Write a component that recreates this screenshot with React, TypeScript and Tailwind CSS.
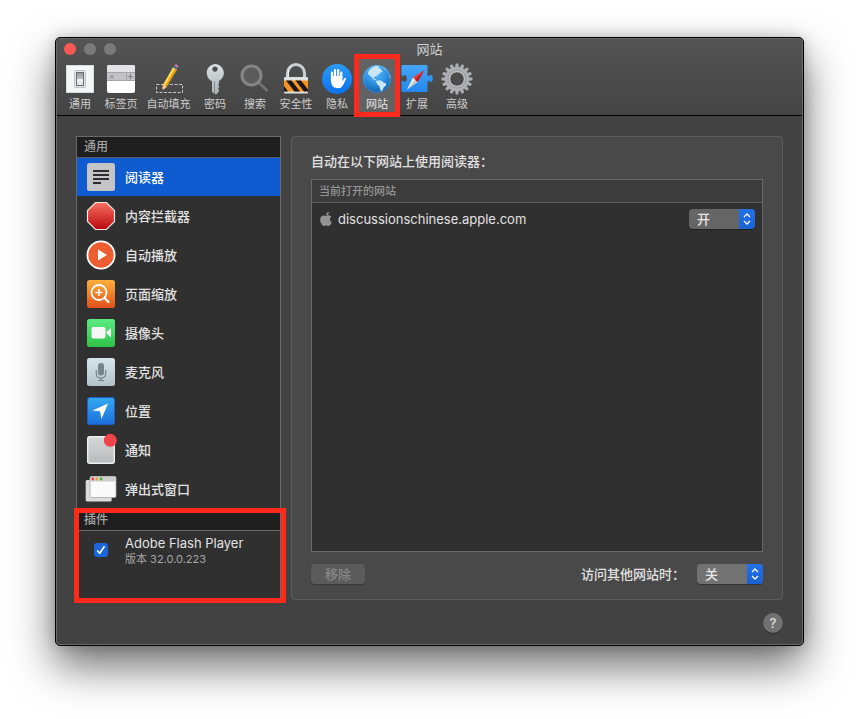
import React, { useState } from "react";
import { FaApple } from "react-icons/fa";

interface IconProps {
  children: React.ReactNode;
}

const Icon: React.FC<IconProps> = ({ children }) => (
  <svg
    viewBox="0 0 32 32"
    className="w-8 h-8 shrink-0 overflow-visible"
    aria-hidden="true"
  >
    {children}
  </svg>
);

const GeneralIcon = () => (
  <Icon>
    <rect x="2" y="2" width="28" height="28" fill="#f5f6f8" />
    <rect x="2.5" y="2.5" width="27" height="27" fill="none" stroke="#d9dadd" />
    <rect x="10.5" y="7.5" width="11" height="17" rx="1" fill="#e4e4e6" stroke="#c3c4c8" />
    <rect x="12.5" y="9.5" width="7" height="13" fill="url(#switch)" stroke="#6d6d73" />
    <defs>
      <linearGradient id="switch" x1="0" y1="0" x2="0" y2="1">
        <stop offset="0" stopColor="#8f9096" />
        <stop offset="0.5" stopColor="#c4c5ca" />
        <stop offset="0.55" stopColor="#f4f4f6" />
        <stop offset="1" stopColor="#dcdde1" />
      </linearGradient>
    </defs>
  </Icon>
);

const TabsIcon = () => (
  <Icon>
    <rect x="2" y="2" width="28" height="28" rx="2" fill="#fff" />
    <path d="M2 10V4a2 2 0 0 1 2-2h24a2 2 0 0 1 2 2v6z" fill="#e3e2e4" />
    <rect x="2" y="9.5" width="28" height="8.5" fill="#c3c2c4" />
    <path d="M2 9.5h28M2 17.5h28M21.5 9.5v8" stroke="#a5a4a7" fill="none" />
    <path d="M5 12l3.5 3.5M8.5 12L5 15.5M25.5 11v5.5M22.8 13.7h5.5" stroke="#808083" fill="none" />
  </Icon>
);

const AutoFillIcon = () => (
  <Icon>
    <rect x="3.5" y="21.5" width="26" height="8" fill="none" stroke="#c9c9c9" strokeDasharray="3 1.5" />
    <path d="M9 27.5l1-5.5 10.2-17.8 3.8 2.2-10.6 17.8z" fill="#f6bd2d" />
    <path d="M10 22l10.2-17.8 1.2.7-10 17.9z" fill="#ffdf62" />
    <path d="M12.4 23.4L22.8 5.7l1.2.7-10.6 17.8z" fill="#d98f16" />
    <path d="M9 27.5l1-5.5 3.4 2.2z" fill="#edc9a0" />
    <path d="M9 27.5l.4-2 1 .7z" fill="#333" />
    <path d="M20.2 4.2l1.2-2 3.8 2.2-1.2 2z" fill="#4d6c8c" />
    <path d="M21.4 2.2c1-2 4.8 0 3.8 2.2z" fill="#f08aa4" />
  </Icon>
);

const KeyIcon = () => (
  <Icon>
    <defs>
      <linearGradient id="key" x1="0" y1="0" x2="0" y2="1">
        <stop offset="0" stopColor="#dbe1e4" />
        <stop offset="1" stopColor="#a9b2b7" />
      </linearGradient>
    </defs>
    <path
      d="M16 1a9 9 0 0 1 4 17v2.500l-1 1.500 1.500 1.500-1.500 2 1.200 1.500-1 2.500-2.200 2-4-2.500V18.200A9 9 0 0 1 16 1zm0 2.500a2.600 2.600 0 1 0 0 5.200 2.600 2.600 0 0 0 0-5.200z"
      fill="url(#key)"
      fillRule="evenodd"
    />
    <path d="M15.500 18.500v11.500" stroke="#7d878c" strokeWidth="1" />
  </Icon>
);

const SearchIcon = () => (
  <Icon>
    <path d="M19.500 19.500l9 8.500" stroke="#727272" strokeWidth="3" />
    <circle cx="12.500" cy="12.500" r="9.500" fill="#5b5b5b" stroke="#868686" strokeWidth="3" />
  </Icon>
);

const SecurityIcon = () => (
  <Icon>
    <path d="M7.500 15V10a8.500 8.500 0 0 1 17 0v5" fill="none" stroke="#c8d0d5" strokeWidth="3" />
    <path d="M8.300 15V10a7.700 7.700 0 0 1 3-6" fill="none" stroke="#f1f5f7" />
    <rect x="4" y="14" width="24" height="16.500" rx="1" fill="#dde2e5" />
    <rect x="4" y="17.500" width="24" height="11" fill="#f79420" />
    <path
      d="M6 17.500h5.500l8.500 11h-5.500zM15.500 17.500H21l7 9v2h-4zM4 23l4 5.500H4z"
      fill="#191919"
    />
  </Icon>
);

const PrivacyIcon = () => (
  <Icon>
    <defs>
      <linearGradient id="privacy" x1="0" y1="0" x2="0" y2="1">
        <stop offset="0" stopColor="#2b9bf5" />
        <stop offset="1" stopColor="#0b72ee" />
      </linearGradient>
    </defs>
    <circle cx="16" cy="16" r="15" fill="url(#privacy)" />
    <path
      d="M11 15V9.500M14 14V7M17.200 14V7M20.300 15V9.500"
      stroke="#fff"
      strokeWidth="2.200"
      strokeLinecap="round"
    />
    <path
      d="M9.900 13h11.500v5l2-2.800c.8-1 2-.6 1.600.6-1.200 3-2.500 6.200-4.300 8.200-1.500 1.600-6.500 1.600-8.200 0-1.900-1.900-2.600-4.500-2.600-7z"
      fill="#fff"
    />
  </Icon>
);

const WebsitesIcon = () => (
  <Icon>
    <defs>
      <radialGradient id="globe" cx="0.450" cy="0.250" r="0.800">
        <stop offset="0" stopColor="#62bdf7" />
        <stop offset="0.550" stopColor="#2a8fe0" />
        <stop offset="1" stopColor="#0d559f" />
      </radialGradient>
      <clipPath id="globe-clip">
        <circle cx="16" cy="16" r="14" />
      </clipPath>
    </defs>
    <circle cx="16" cy="16" r="14" fill="url(#globe)" />
    <g clipPath="url(#globe-clip)" fill="#c9e6f8">
      <path d="M8 7.500l3-3 4-1.800 3 .6-.5 1.700 2 .5 1 2 1.200 1-2.200 1-1.500 1.800-1.800.8-.7 1.700-1.500-.5-1.300.9.5 1.500 1.500.4.800 1.400-2-.5-2.200-1.700L9.800 13 8 12.500 7 10z" />
      <path d="M15 18l2.500-.8 3.200.6 1.800 1.700 2.700 1-.3 2.300-2 1.500-1.300 2.700-1.700 1.500-.9-3-.8-2.500-2.400-2.200z" />
      <path d="M22 4l3 2.500-1.500.3zM28 11l2 3.500-1.200.5z" fillOpacity="0.600" />
    </g>
    <circle cx="16" cy="16" r="13.500" fill="none" stroke="#9bd2f7" strokeOpacity="0.300" />
  </Icon>
);

const ExtensionsIcon = () => (
  <Icon>
    <defs>
      <linearGradient id="puzzle" x1="0" y1="0" x2="0" y2="1">
        <stop offset="0" stopColor="#45a5f8" />
        <stop offset="1" stopColor="#2388ef" />
      </linearGradient>
    </defs>
    <path
      d="M1.500 2h24a1 1 0 0 1 1 1v10l1.500.3c.5-.9 1-1.300 1.800-1.300 1.200 0 2 1.500 2 3.500s-.8 3.500-2 3.500c-.8 0-1.300-.4-1.800-1.300l-1.500.3v10a1 1 0 0 1-1 1h-24a1 1 0 0 1-1-1V18l1.500-.2c.5.7 1 1.200 1.700 1.200 1.200 0 2-1.500 2-3.500s-.8-3.500-2-3.500c-.7 0-1.200.5-1.700 1.200L.5 13V3a1 1 0 0 1 1-1z"
      fill="url(#puzzle)"
    />
    <path d="M6 26.500l6-12 4.500 4.500z" fill="#f4f4f4" />
    <path d="M6 26.500l8.200-9.800 2.300 2.300z" fill="#c5c8cc" />
    <path d="M23.500 7L12 14.500l4.500 4.500z" fill="#ef3b33" />
    <path d="M23.500 7l-9.300 9.700 2.300 2.300z" fill="#b91f1d" />
  </Icon>
);

const GEAR_ANGLES = [0, 22.5, 45, 67.5, 90, 112.5, 135, 157.5, 180, 202.5, 225, 247.5, 270, 292.5, 315, 337.5];

const AdvancedIcon = () => (
  <Icon>
    <g fill="#acb0b3">
      {GEAR_ANGLES.map((angle) => (
        <path key={angle} d="M13.800 6l1-5.500h2.400l1 5.500z" transform={`rotate(${angle} 16 16)`} />
      ))}
    </g>
    <circle cx="16" cy="16" r="9.500" fill="none" stroke="#acb0b3" strokeWidth="5" />
    <circle cx="16" cy="16" r="9" fill="none" stroke="#9b9fa2" strokeWidth="1" />
    <circle cx="16" cy="16" r="7.300" fill="none" stroke="#c9cccf" strokeWidth="0.800" />
  </Icon>
);

const ReaderIcon = () => (
  <Icon>
    <rect x="2" y="2" width="28" height="28" rx="2.500" fill="#c5c5c7" />
    <path d="M8 10h16M8 14h16M8 18h16M8 22h8" stroke="#2d2d2f" strokeWidth="2" />
  </Icon>
);

const BlockerIcon = () => (
  <Icon>
    <defs>
      <linearGradient id="stop" x1="0" y1="0" x2="0" y2="1">
        <stop offset="0" stopColor="#f8705f" />
        <stop offset="1" stopColor="#b90710" />
      </linearGradient>
    </defs>
    <path
      d="M10.500 2.500h11l8 8v11l-8 8h-11l-8-8v-11z"
      fill="url(#stop)"
      stroke="#f1e6e5"
      strokeWidth="1.200"
    />
  </Icon>
);

const AutoPlayIcon = () => (
  <Icon>
    <circle cx="16" cy="16" r="13.600" fill="#ec5d31" stroke="#fff" strokeWidth="1.800" />
    <path d="M13 10.500v11l9-5.500z" fill="#fff" />
  </Icon>
);

const ZoomIcon = () => (
  <Icon>
    <defs>
      <linearGradient id="page-zoom" x1="0" y1="0" x2="0" y2="1">
        <stop offset="0" stopColor="#fbb03b" />
        <stop offset="1" stopColor="#e2501c" />
      </linearGradient>
    </defs>
    <rect x="2" y="2" width="28" height="28" rx="2.500" fill="url(#page-zoom)" />
    <circle cx="14" cy="14.500" r="7.500" fill="none" stroke="#fff" strokeWidth="1.800" />
    <path d="M14 11v7M10.500 14.500h7" stroke="#fff" strokeWidth="1.600" />
    <path d="M19.500 20l4 4" stroke="#fff" strokeWidth="2.200" strokeLinecap="round" />
  </Icon>
);

const CameraIcon = () => (
  <Icon>
    <defs>
      <linearGradient id="camera" x1="0" y1="0" x2="0" y2="1">
        <stop offset="0" stopColor="#5cea80" />
        <stop offset="1" stopColor="#2fc348" />
      </linearGradient>
    </defs>
    <rect x="2" y="2" width="28" height="28" rx="2.500" fill="url(#camera)" />
    <rect x="6.500" y="10" width="14" height="11.500" rx="2" fill="#f6f7f6" />
    <path d="M21.500 15l4.500-4v9.500l-4.500-4z" fill="#f6f7f6" />
  </Icon>
);

const MicrophoneIcon = () => (
  <Icon>
    <defs>
      <linearGradient id="mic" x1="0" y1="0" x2="0" y2="1">
        <stop offset="0" stopColor="#d7e4ea" />
        <stop offset="1" stopColor="#b4c2c8" />
      </linearGradient>
    </defs>
    <rect x="2" y="2" width="28" height="28" rx="2.500" fill="url(#mic)" />
    <rect x="13" y="7" width="6" height="12.500" rx="3" fill="#75838a" />
    <path d="M11.300 14v3.500a4.700 4.700 0 0 0 9.400 0V14M16 22v2.500M13 24.500h6" stroke="#75838a" strokeWidth="1.200" fill="none" />
  </Icon>
);

const LocationIcon = () => (
  <Icon>
    <defs>
      <linearGradient id="location" x1="0" y1="0" x2="0" y2="1">
        <stop offset="0" stopColor="#35a9f3" />
        <stop offset="1" stopColor="#1d6fdb" />
      </linearGradient>
    </defs>
    <rect x="2.500" y="2.500" width="27" height="27" rx="2.500" fill="url(#location)" stroke="#1b61c6" />
    <path d="M23 8.500L7.500 15.500l7.500.8 1.500 7.700z" fill="#fff" />
  </Icon>
);

const NotificationsIcon = () => (
  <Icon>
    <defs>
      <linearGradient id="notification" x1="0" y1="0" x2="0" y2="1">
        <stop offset="0" stopColor="#d6d7d9" />
        <stop offset="1" stopColor="#b9babc" />
      </linearGradient>
    </defs>
    <rect x="2.700" y="2.700" width="26.600" height="26.600" rx="2" fill="url(#notification)" stroke="#f0f0f0" strokeWidth="1.400" />
    <circle cx="25.300" cy="6.300" r="6.500" fill="#f0444a" />
  </Icon>
);

const PopupsIcon = () => (
  <Icon>
    <rect x="0.700" y="7" width="26" height="21.500" rx="1.500" fill="#dcdcdc" />
    <rect x="5" y="3.500" width="26" height="21" rx="1.500" fill="#fafafa" stroke="#a8a8a8" strokeWidth="0.800" />
    <path d="M5 8.500V5a1.500 1.500 0 0 1 1.500-1.500h23A1.500 1.500 0 0 1 31 5v3.500z" fill="#cfcfcf" />
    <circle cx="7.800" cy="6" r="1.400" fill="#e8483f" />
    <circle cx="12" cy="6" r="1.400" fill="#eda52f" />
    <circle cx="16.200" cy="6" r="1.400" fill="#49b43c" />
  </Icon>
);

const toolbar = [
  { label: "通用", icon: GeneralIcon, width: "w-10" },
  { label: "标签页", icon: TabsIcon, width: "w-[42px]" },
  { label: "自动填充", icon: AutoFillIcon, width: "w-[53px]" },
  { label: "密码", icon: KeyIcon, width: "w-10" },
  { label: "搜索", icon: SearchIcon, width: "w-10" },
  { label: "安全性", icon: SecurityIcon, width: "w-[42px]" },
  { label: "隐私", icon: PrivacyIcon, width: "w-10" },
  { label: "网站", icon: WebsitesIcon, width: "w-10", active: true },
  { label: "扩展", icon: ExtensionsIcon, width: "w-10" },
  { label: "高级", icon: AdvancedIcon, width: "w-10" },
];

const categories = [
  { label: "阅读器", icon: ReaderIcon },
  { label: "内容拦截器", icon: BlockerIcon },
  { label: "自动播放", icon: AutoPlayIcon },
  { label: "页面缩放", icon: ZoomIcon },
  { label: "摄像头", icon: CameraIcon },
  { label: "麦克风", icon: MicrophoneIcon },
  { label: "位置", icon: LocationIcon },
  { label: "通知", icon: NotificationsIcon },
  { label: "弹出式窗口", icon: PopupsIcon },
];

interface PopUpProps {
  id: string;
  label?: string;
  initial: string;
  tint: string;
}

const PopUp: React.FC<PopUpProps> = ({ id, label, initial, tint }) => (
  <span className="relative inline-flex w-[66px] h-5 shrink-0">
    <select
      id={id}
      aria-label={label}
      defaultValue={initial}
      className={`appearance-none w-full h-5 pl-2 pr-4 rounded text-[13px] leading-5 font-medium text-[#e6e6e6] shadow-[0_1px_1px_rgba(0,0,0,0.35)] ${tint}`}
    >
      <option>开</option>
      <option>关</option>
    </select>
    <span className="absolute inset-y-0 right-0 w-4 rounded-r bg-linear-to-b from-[#2273e8] to-[#1a60d3] pointer-events-none flex items-center justify-center">
      <svg viewBox="0 0 8 12" className="w-2 h-3" fill="none" stroke="#fff" strokeWidth="1.300" aria-hidden="true">
        <path d="M1 4l3-3 3 3M1 8l3 3 3-3" />
      </svg>
    </span>
  </span>
);

// Red frame drawn around the parts to look at
const Highlight: React.FC<{ className: string }> = ({ className }) => (
  <span
    className={`absolute z-10 border-[5px] border-[#fc2a1c] pointer-events-none ${className}`}
    aria-hidden="true"
  />
);

const App: React.FC = () => {
  const [selected, setSelected] = useState("阅读器");
  const [flash, setFlash] = useState(true);

  return (
    <div className="min-h-screen bg-white flex flex-col px-[55px] pt-[37px] pb-[73px] font-['Inter','Noto_Sans_CJK_SC',sans-serif] text-[13px] leading-4 text-[#e2e2e2]">
      <main className="flex-1 flex flex-col rounded-[5px] border border-black bg-[#424242] shadow-[0_20px_44px_rgba(0,0,0,0.58),0_0_14px_rgba(0,0,0,0.18)]">
        <div className="flex-1 flex flex-col rounded-[4px] border border-[#696969]">
          {/* title bar and toolbar */}
          <header className="bg-linear-to-b from-[#545454] to-[#444444] border-b border-black rounded-t-[3px]">
            <div className="h-5 grid grid-cols-[1fr_auto_1fr] items-center px-[7px]">
              <div className="flex gap-2">
                <button className="w-3 h-3 rounded-full bg-[#fc5753]" aria-label="关闭" />
                <button className="w-3 h-3 rounded-full bg-[#7a7a7a]" aria-label="最小化" />
                <button className="w-3 h-3 rounded-full bg-[#7a7a7a]" aria-label="缩放" />
              </div>
              <h1 className="text-[13px] leading-5 text-[#d0d0d0]">网站</h1>
            </div>
            <nav className="flex px-[3px]">
              {toolbar.map(({ label, icon: ToolIcon, width, active }) => (
                <button
                  key={label}
                  className={`relative h-14 pt-1 flex flex-col items-center shrink-0 text-[11px] ${width} ${
                    active ? "bg-[#626262] text-[#e6e6e6]" : "text-[#cccccc]"
                  }`}
                >
                  <ToolIcon />
                  <span className="mt-px leading-4 whitespace-nowrap">{label}</span>
                  {active && <Highlight className="-inset-x-[3px] -top-[5px] -bottom-[2px]" />}
                </button>
              ))}
            </nav>
          </header>

          <div className="flex-1 flex gap-2.5 px-[19px] pt-5">
            {/* sidebar */}
            <aside className="w-[205px] shrink-0 flex flex-col border border-[#6a6a6a] bg-[#303030]">
              <h2 className="h-[21px] px-[7px] border-b border-[#5a5a5a] bg-[#1e1e1e] text-[12px] leading-5 font-medium text-[#a6a6a6]">
                通用
              </h2>
              <ul className="flex flex-col gap-px">
                {categories.map(({ label, icon: CategoryIcon }) => (
                  <li key={label}>
                    <button
                      onClick={() => setSelected(label)}
                      className={`w-full h-[38px] px-2 flex items-center gap-2 font-medium ${
                        selected === label ? "bg-[#0f5bd0] text-white" : ""
                      }`}
                    >
                      <CategoryIcon />
                      {label}
                    </button>
                  </li>
                ))}
              </ul>
              <section className="relative flex-1 mt-px">
                <h2 className="h-[22px] px-[7px] border-b border-[#6a6a6a] bg-[#1e1e1e] text-[12px] leading-[22px] font-medium text-[#a6a6a6]">
                  插件
                </h2>
                <label className="flex items-start gap-[17px] pt-1 pl-[17px]">
                  <span className="relative w-3.5 h-3.5 mt-2 shrink-0">
                    <input
                      type="checkbox"
                      checked={flash}
                      onChange={(e) => setFlash(e.target.checked)}
                      className="block appearance-none w-full h-full rounded-[3px] bg-[#6a6a6a] checked:bg-[#1c66dc]"
                    />
                    {flash && (
                      <svg
                        viewBox="0 0 14 14"
                        className="absolute inset-0 pointer-events-none"
                        fill="none"
                        stroke="#fff"
                        strokeWidth="1.600"
                        aria-hidden="true"
                      >
                        <path d="M3.200 7.500l2.600 2.800 4.700-7" />
                      </svg>
                    )}
                  </span>
                  <span className="flex flex-col">
                    <span>Adobe Flash Player</span>
                    <span className="text-[11px] text-[#a6a6a6]">版本 32.0.0.223</span>
                  </span>
                </label>
                <Highlight className="-top-px -left-[3px] -right-[6px] -bottom-1" />
              </section>
            </aside>

            {/* detail panel */}
            <section className="flex-1 min-w-0 flex flex-col rounded-[4px] border border-[#5c5c5c] bg-[#494949] px-[19px] pt-4 pb-[15px]">
              <h2 className="font-medium mb-[10px]">自动在以下网站上使用阅读器：</h2>
              <div className="flex-1 border border-[#696969] bg-[#303030]">
                <table className="w-full">
                  <thead>
                    <tr className="bg-[#3c3c3c] border-b border-[#5f5f5f]">
                      <th colSpan={2} className="h-[22px] px-[7px] text-left text-[11px] font-medium text-[#949494]">
                        当前打开的网站
                      </th>
                    </tr>
                  </thead>
                  <tbody>
                    <tr>
                      <td className="h-[33px] pl-2">
                        <div className="flex items-center gap-1.5">
                          <FaApple className="w-3 h-4 shrink-0 text-[#949494]" />
                          discussionschinese.apple.com
                        </div>
                      </td>
                      <td className="pr-[7px]">
                        <div className="flex justify-end">
                          <PopUp id="site-reader" label="discussionschinese.apple.com" initial="开" tint="bg-[#656565]" />
                        </div>
                      </td>
                    </tr>
                  </tbody>
                </table>
              </div>
              <div className="mt-3 flex items-center justify-between">
                <button
                  disabled
                  className="h-5 w-[54px] rounded bg-[#5b5b5b] font-medium text-[#888888] shadow-[0_1px_1px_rgba(0,0,0,0.25)]"
                >
                  移除
                </button>
                <div className="flex items-center gap-3">
                  <label htmlFor="other-sites" className="font-medium">
                    访问其他网站时：
                  </label>
                  <PopUp id="other-sites" initial="关" tint="bg-[#727272]" />
                </div>
              </div>
            </section>
          </div>

          <footer className="flex justify-end px-[19px] pt-[13px] pb-[11px]">
            <button
              className="w-5 h-5 rounded-full bg-[#717171] leading-5 font-medium shadow-[0_1px_1px_rgba(0,0,0,0.3)]"
              aria-label="帮助"
            >
              ?
            </button>
          </footer>
        </div>
      </main>
    </div>
  );
};

export default App;
